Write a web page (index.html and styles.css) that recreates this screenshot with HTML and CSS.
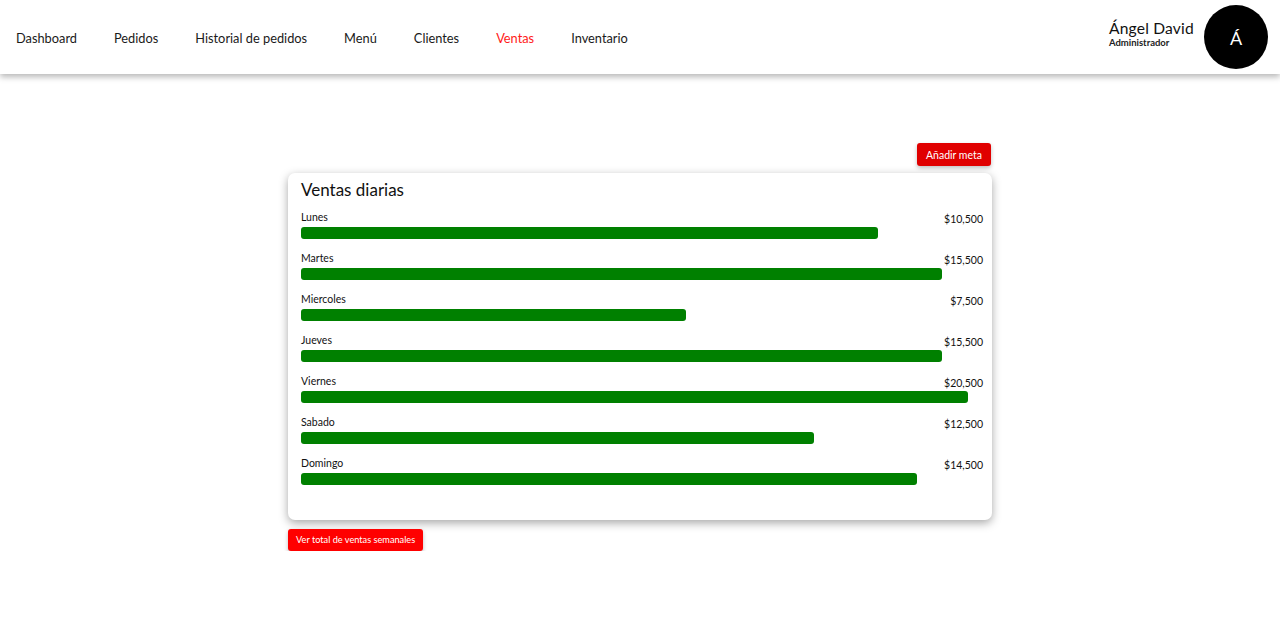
FILE: index.html
```html
<!DOCTYPE html>
<html lang="es">
<head>
<meta charset="utf-8">
<title>Ventas</title>
<link rel="stylesheet" href="styles.css">
</head>
<body>
<header class="topbar">
  <nav class="nav">
    <a class="nav-link">Dashboard</a>
    <a class="nav-link">Pedidos</a>
    <a class="nav-link">Historial de pedidos</a>
    <a class="nav-link">Menú</a>
    <a class="nav-link">Clientes</a>
    <a class="nav-link active">Ventas</a>
    <a class="nav-link">Inventario</a>
  </nav>
  <div class="user">
    <div class="user-info">
      <div class="user-name">Ángel David</div>
      <div class="user-role">Administrador</div>
    </div>
    <div class="avatar">Á</div>
  </div>
</header>
<main class="main">
  <div class="wrap">
    <div class="actions"><button class="btn btn-goal">Añadir meta</button></div>
    <section class="card">
      <h2 class="card-title">Ventas diarias</h2>
      <div class="rows">
        <div class="row"><div class="row-head"><span class="day">Lunes</span><span class="amount">$10,500</span></div><div class="bar" style="width:577px"></div></div>
        <div class="row"><div class="row-head"><span class="day">Martes</span><span class="amount">$15,500</span></div><div class="bar" style="width:641px"></div></div>
        <div class="row"><div class="row-head"><span class="day">Miercoles</span><span class="amount">$7,500</span></div><div class="bar" style="width:385px"></div></div>
        <div class="row"><div class="row-head"><span class="day">Jueves</span><span class="amount">$15,500</span></div><div class="bar" style="width:641px"></div></div>
        <div class="row"><div class="row-head"><span class="day">Viernes</span><span class="amount">$20,500</span></div><div class="bar" style="width:667px"></div></div>
        <div class="row"><div class="row-head"><span class="day">Sabado</span><span class="amount">$12,500</span></div><div class="bar" style="width:513px"></div></div>
        <div class="row"><div class="row-head"><span class="day">Domingo</span><span class="amount">$14,500</span></div><div class="bar" style="width:616px"></div></div>
      </div>
    </section>
    <div class="footer-actions"><button class="btn btn-total">Ver total de ventas semanales</button></div>
  </div>
</main>
</body>
</html>
```

FILE: styles.css
```css
* { box-sizing: border-box; }
html, body { margin: 0; padding: 0; background: #fff; }
body {
  font-family: "Lato", "Noto Sans", sans-serif;
  color: #111;
}
.topbar {
  height: 74px;
  display: flex;
  align-items: center;
  justify-content: space-between;
  padding: 0 12px 0 16px;
  background: #fff;
  box-shadow: 0 3px 6px rgba(0,0,0,0.28);
  position: relative;
}
.nav { display: flex; gap: 37px; align-items: center; padding-top: 2px; }
.nav-link {
  font-size: 12.8px;
  color: #1a1a1a;
  text-decoration: none;
}
.nav-link.active { color: #ff1a1a; }
.user { display: flex; align-items: center; gap: 10px; }
.user-info { display: flex; flex-direction: column; margin-top: -8px; }
.user-name { font-size: 15.6px; color: #111; letter-spacing: 0.2px; line-height: 18px; }
.user-role { font-size: 9.5px; font-weight: 700; color: #222; line-height: 11px; }
.avatar {
  width: 64px; height: 64px;
  border-radius: 50%;
  background: #000;
  color: #fff;
  display: flex; align-items: center; justify-content: center;
  font-size: 18px;
  padding-top: 2px;
}
.main { display: flex; justify-content: center; padding-top: 69px; }
.wrap { width: 704px; }
.actions { display: flex; justify-content: flex-end; padding-right: 1px; margin-bottom: 7px; }
.btn {
  border: none;
  color: #fff;
  font-family: inherit;
  border-radius: 3px;
  box-shadow: 0 2px 4px rgba(0,0,0,0.25);
  cursor: pointer;
}
.btn-goal {
  background: #e00000;
  font-size: 10.5px;
  height: 23px;
  padding: 0 9px;
}
.card {
  background: #fff;
  border-radius: 7px;
  box-shadow: 0 3px 10px rgba(0,0,0,0.35);
  padding: 7px 9px 35px 13px;
}
.card-title {
  margin: 0 0 9px;
  font-size: 17px;
  font-weight: 400;
  color: #111;
  line-height: 20px;
}
.rows { display: flex; flex-direction: column; gap: 11px; }
.row-head {
  display: flex;
  justify-content: space-between;
  align-items: flex-start;
  height: 18px;
}
.day { font-size: 10.5px; line-height: 13px; color: #111; margin-top: 2px; }
.amount { font-size: 10.5px; line-height: 13px; color: #111; margin-top: 4px; }
.bar {
  height: 12px;
  background: #008000;
  border-radius: 3px;
}
.footer-actions { margin-top: 7px; }
.btn-total {
  background: #ff0000;
  font-size: 9.2px;
  height: 22px;
  padding: 0 8px;
}
```
